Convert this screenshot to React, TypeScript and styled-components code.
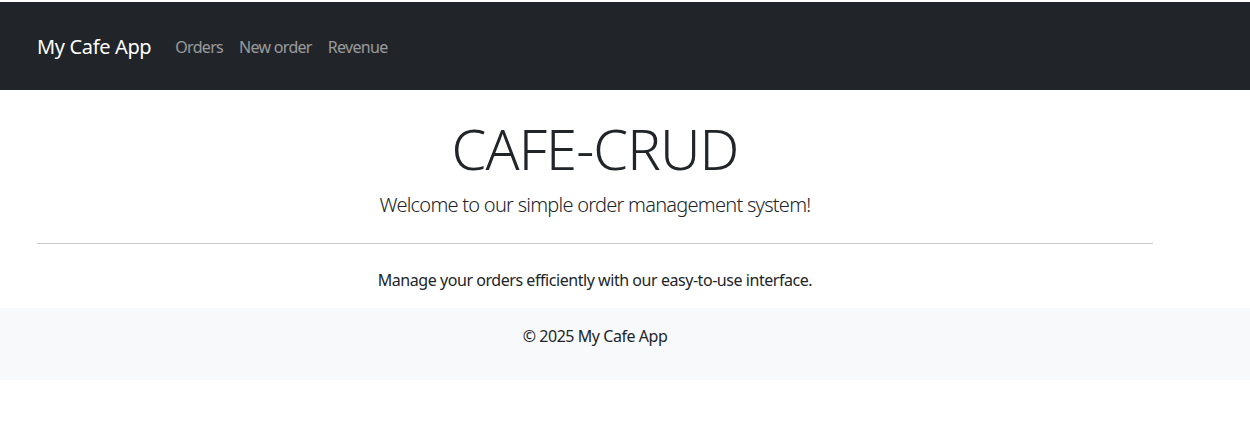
import React from "react";
import styled, { createGlobalStyle } from "styled-components";

const Global = createGlobalStyle`
  html, body { margin: 0; padding: 0; background: #fff; }
  body {
    font-family: "Noto Sans", "Open Sans", sans-serif;
    font-size: 16px;
    line-height: 1.5;
    color: #212529;
    letter-spacing: -0.45px;
  }
  * { box-sizing: border-box; }
`;

const Page = styled.div`
  padding-top: 2px;
`;

const Container = styled.div`
  width: 1140px;
  margin: 0 25px;
  padding: 0 12px;
`;

const Navbar = styled.nav`
  background: #212529;
  padding: 24px 0;
`;

const NavInner = styled(Container)`
  display: flex;
  align-items: center;
`;

const Brand = styled.a`
  color: #fff;
  font-size: 20px;
  line-height: 30px;
  padding: 6px 0 4px;
  margin-right: 16px;
  text-decoration: none;
  letter-spacing: -0.35px;
`;

const NavList = styled.ul`
  display: flex;
  list-style: none;
  margin: 0;
  padding: 0;
`;

const NavLink = styled.a`
  display: block;
  padding: 9px 8px 7px;
  color: rgba(255, 255, 255, 0.55);
  text-decoration: none;
  letter-spacing: -0.7px;
`;

const Main = styled.main`
  text-align: center;
`;

const Hero = styled.div`
  padding-top: 25px;
`;

const Title = styled.h1`
  font-size: 56px;
  font-weight: 300;
  line-height: 1.2;
  margin: 0 0 8px;
  letter-spacing: -0.9px;
`;

const Lead = styled.p`
  font-size: 20px;
  font-weight: 300;
  margin: 0;
  letter-spacing: -0.75px;
`;

const Rule = styled.hr`
  border: 0;
  border-top: 1px solid #c6c7c8;
  margin: 23px 0 24px;
`;

const Text = styled.p`
  margin: 0 0 16px;
`;

const Footer = styled.footer`
  background: #f8f9fa;
  padding: 16px 0;
  text-align: center;
`;

const FooterText = styled.p`
  margin: 0 0 16px;
`;

export default function App() {
  return (
    <Page>
      <Global />
      <Navbar>
        <NavInner>
          <Brand href="#">My Cafe App</Brand>
          <NavList>
            <li><NavLink href="#">Orders</NavLink></li>
            <li><NavLink href="#">New order</NavLink></li>
            <li><NavLink href="#">Revenue</NavLink></li>
          </NavList>
        </NavInner>
      </Navbar>
      <Main>
        <Container>
          <Hero>
            <Title>CAFE-CRUD</Title>
            <Lead>Welcome to our simple order management system!</Lead>
          </Hero>
          <Rule />
          <Text>Manage your orders efficiently with our easy-to-use interface.</Text>
        </Container>
      </Main>
      <Footer>
        <Container>
          <FooterText>© 2025 My Cafe App</FooterText>
        </Container>
      </Footer>
    </Page>
  );
}
